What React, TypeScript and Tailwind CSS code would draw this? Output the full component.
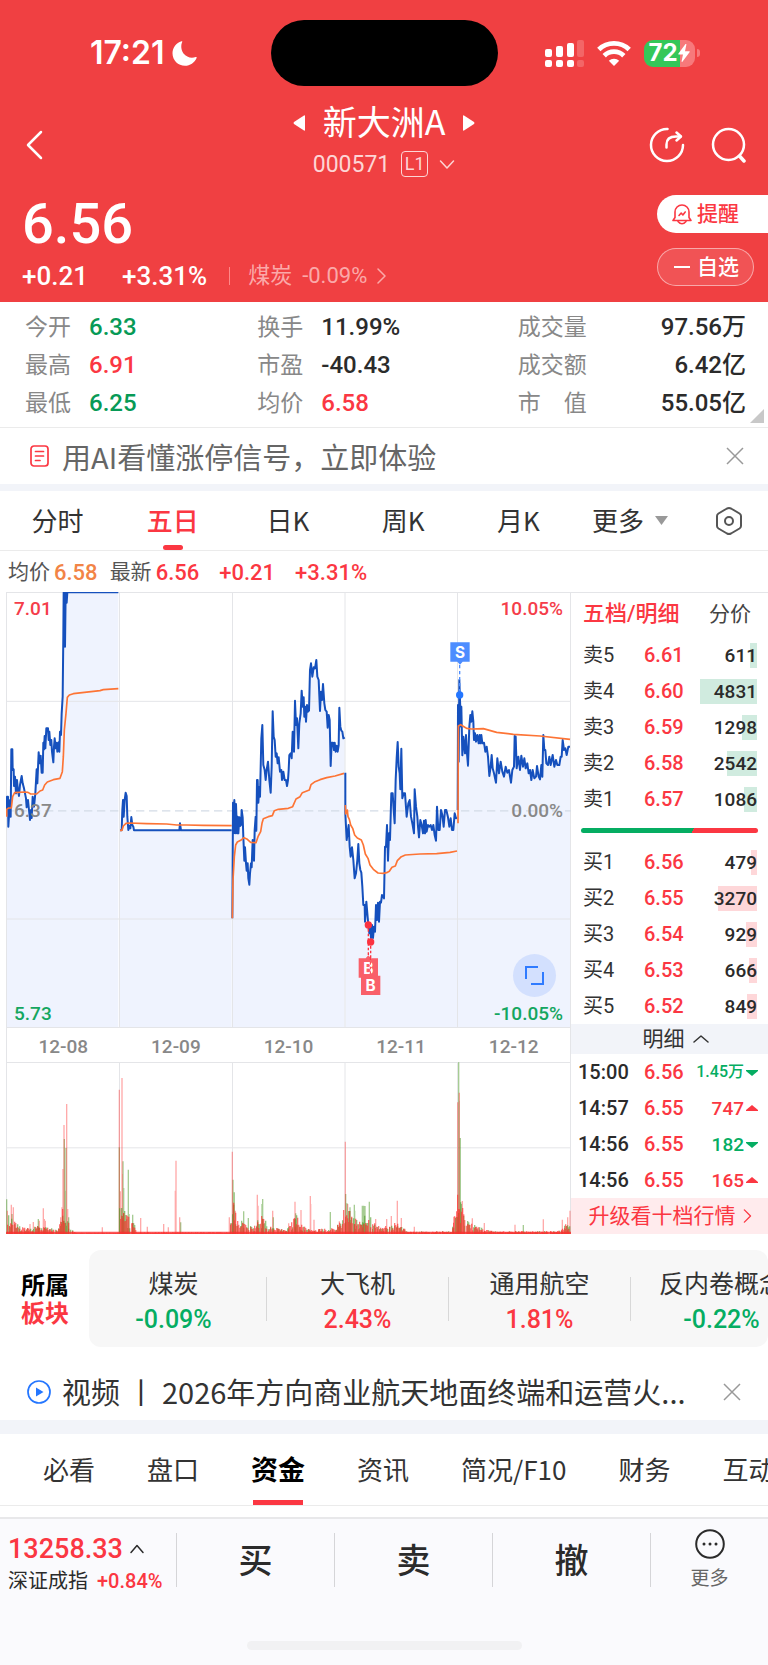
import React, { useState } from 'react';

type Tone = 'up' | 'down' | 'plain';
type Point = [number, number];

interface Stat {
  label: string;
  value: string;
  tone: Tone;
}

interface QuoteLevel {
  label: string;
  price: string;
  volume: string;
  bar: number;
}

interface Trade {
  time: string;
  price: string;
  volume: string;
  tone: Tone;
}

interface DaySeries {
  shift: number;
  price: string;
  average: string;
}

const toneClass: Record<Tone, string> = {
  up: 'text-[#fb3742]',
  down: 'text-[#079a56]',
  plain: 'text-[#2b2b2b]',
};

const statColumns: Stat[][] = [
  [
    { label: '今开', value: '6.33', tone: 'down' },
    { label: '最高', value: '6.91', tone: 'up' },
    { label: '最低', value: '6.25', tone: 'down' },
  ],
  [
    { label: '换手', value: '11.99%', tone: 'plain' },
    { label: '市盈', value: '-40.43', tone: 'plain' },
    { label: '均价', value: '6.58', tone: 'up' },
  ],
  [
    { label: '成交量', value: '97.56万', tone: 'plain' },
    { label: '成交额', value: '6.42亿', tone: 'plain' },
    { label: '市　值', value: '55.05亿', tone: 'plain' },
  ],
];

const periods = ['分时', '五日', '日K', '周K', '月K'];
const dates = ['12-08', '12-09', '12-10', '12-11', '12-12'];

const asks: QuoteLevel[] = [
  { label: '卖5', price: '6.61', volume: '611', bar: 7 },
  { label: '卖4', price: '6.60', volume: '4831', bar: 57 },
  { label: '卖3', price: '6.59', volume: '1298', bar: 15 },
  { label: '卖2', price: '6.58', volume: '2542', bar: 30 },
  { label: '卖1', price: '6.57', volume: '1086', bar: 13 },
];

const bids: QuoteLevel[] = [
  { label: '买1', price: '6.56', volume: '479', bar: 6 },
  { label: '买2', price: '6.55', volume: '3270', bar: 39 },
  { label: '买3', price: '6.54', volume: '929', bar: 11 },
  { label: '买4', price: '6.53', volume: '666', bar: 8 },
  { label: '买5', price: '6.52', volume: '849', bar: 10 },
];

const trades: Trade[] = [
  { time: '15:00', price: '6.56', volume: '1.45万', tone: 'down' },
  { time: '14:57', price: '6.55', volume: '747', tone: 'up' },
  { time: '14:56', price: '6.55', volume: '182', tone: 'down' },
  { time: '14:56', price: '6.55', volume: '165', tone: 'up' },
];

const sectors = [
  { name: '煤炭', change: '-0.09%', up: false },
  { name: '大飞机', change: '2.43%', up: true },
  { name: '通用航空', change: '1.81%', up: true },
  { name: '反内卷概念', change: '-0.22%', up: false },
];

const sections = ['必看', '盘口', '资金', '资讯', '简况/F10', '财务', '互动'];

const days: DaySeries[] = [
  {
    shift: 0,
    price:
      '20,690 21,650 24,650 25,740 28,690 30,660 32,710 34,508 37,508 38,570 41,568 42,618 45,590 48,640 51,600 54,632 57,648 60,615 65,588 68,610 72,625 75,640 78,655 80,682 84,660 87,690 90,720 93,690 95,714 98,650 102,680 106,640 110,568 112,610 116,517 119,550 122,527 125,578 128,578 130,488 132,508 134,468 136,505 139,445 144,445 146,480 148,455 151,495 154,480 156,515 160,547 162,500 164,475 167,505 170,488 172,515 176,487 178,515 180,455 183,465 185,400 188,350 190,165 191,37 195,200 197,37 200,68 202,37 355,37',
    average:
      '20,710 20,688 26,684 34,684 38,650 44,638 72,636 84,637 92,642 110,642 120,633 128,630 134,615 142,606 160,599 180,595 187,575 190,530 193,450 198,400 202,352 208,345 220,341 300,332 310,329 355,326',
  },
  {
    shift: 0,
    price:
      '360,751 365,751 367,690 369,660 371,710 374,660 377,638 380,648 382,710 385,750 388,738 391,745 394,711 397,735 400,740 402,751 538,751 540,730 543,751 695,751',
    average: '360,751 366,751 370,738 378,730 388,729 440,731 500,732 530,735 560,735 610,736 695,737',
  },
  {
    shift: 660,
    price:
      '37,1015 39,668 41,760 43,660 46,760 48,672 51,760 53,710 55,760 58,712 60,738 63,735 65,690 68,712 70,770 73,842 75,802 78,850 80,872 83,850 85,895 88,914 90,880 93,850 95,862 98,780 100,800 102,842 104,750 107,710 109,752 111,600 113,600 115,668 118,620 120,650 124,475 127,435 130,555 134,570 137,600 140,570 144,545 148,600 152,638 155,560 158,394 161,470 164,480 167,530 170,520 173,550 176,532 180,575 184,570 186,600 190,575 194,600 198,600 201,618 204,600 206,570 208,525 212,520 215,535 218,455 222,515 225,362 228,435 231,415 235,505 238,430 242,400 245,332 248,380 251,352 253,410 256,380 258,425 261,375 264,395 267,392 270,270 273,250 277,290 281,262 285,265 289,240 292,290 296,300 300,393 303,335 306,360 309,312 313,370 316,390 320,395 323,443 326,405 329,420 332,558 335,488 339,488 342,510 344,488 347,515 350,497 353,515 356,495 358,383 361,440 364,452 367,455 370,475 374,472',
    average:
      '37,1015 39,900 43,830 47,795 52,786 62,781 72,773 82,778 92,787 108,788 114,770 122,755 126,730 130,716 145,710 157,707 163,692 175,688 205,685 218,680 228,657 240,650 247,638 268,630 273,614 285,605 300,599 320,593 345,588 372,580',
  },
  {
    shift: 660,
    price:
      '376,578 376,700 380,780 386,735 389,800 392,830 396,802 400,840 404,895 408,880 412,840 415,792 418,850 421,870 424,878 427,920 430,975 434,975 435,1025 439,965 442,1000 445,1035 448,1060 450,1030 453,1074 456,1035 459,1074 462,1040 465,1055 468,975 471,1020 474,968 477,1025 480,965 483,968 486,945 492,955 495,800 498,800 501,735 504,842 507,760 510,780 514,640 518,640 521,690 524,730 527,600 530,535 533,486 536,560 539,580 541,628 544,506 547,655 551,640 555,640 560,710 565,670 569,660 573,710 578,735 582,760 584,628 588,680 592,710 594,740 597,772 601,720 605,735 609,760 612,722 615,760 617,720 620,755 624,735 628,740 632,735 636,750 640,735 644,765 648,782 651,680 655,750 659,750 663,690 667,705 671,740 675,690 679,690 684,712 688,740 692,715 696,750 700,750 704,700 708,715 711,712',
    average:
      '376,675 377,702 382,690 384,710 388,718 392,735 398,745 404,765 412,774 424,780 430,795 436,822 444,835 450,855 460,868 474,879 490,880 500,878 508,874 516,862 526,858 532,842 544,830 556,825 600,822 650,821 690,817 711,813',
  },
  {
    shift: 660,
    price:
      '713,690 714,375 716,545 718,300 720,360 723,440 724,380 727,526 730,470 733,500 735,520 738,465 741,520 744,557 748,440 751,405 754,425 757,394 760,425 762,480 765,460 768,485 772,465 776,490 779,465 781,490 784,465 787,490 792,488 796,515 800,500 804,530 808,588 812,560 815,525 818,565 822,580 828,608 832,535 837,580 842,545 847,575 852,590 857,560 862,578 867,570 870,590 873,608 877,570 882,560 884,468 887,470 890,565 895,530 900,570 904,527 909,560 913,535 917,565 922,550 926,580 930,570 934,600 938,570 943,595 948,590 951,558 956,590 960,598 964,555 967,590 970,465 973,510 976,510 979,550 984,555 988,530 992,555 998,525 1003,560 1008,540 1012,555 1018,555 1022,530 1025,530 1028,480 1032,510 1036,505 1040,525 1045,500 1050,500',
    average: '714,730 715,438 722,434 732,440 740,445 754,447 790,446 830,457 880,463 960,468 1050,478',
  },
];

// [x, height] of single tall bars
const redSpikes: Point[] = [
  [22, 70], [34, 88], [40, 80], [90, 30], [100, 36], [118, 40], [130, 77], [133, 45], [136, 40], [182, 50],
  [186, 80], [189, 195], [192, 327], [200, 390], [203, 75], [307, 20], [358, 433], [361, 128], [366, 468],
  [367, 180], [422, 48], [442, 22], [491, 30], [505, 20], [526, 130], [528, 220], [539, 50], [688, 50], [697, 247],
  [706, 70], [772, 118], [774, 85], [818, 70], [866, 32], [885, 97], [903, 72], [931, 114], [932, 90], [942, 43],
  [1018, 38], [1036, 277], [1043, 90], [1127, 45], [1160, 45], [1174, 54], [1192, 100], [1204, 48], [1243, 22],
  [1361, 52], [1367, 50], [1373, 395], [1378, 424], [1378, 190], [1387, 99], [1417, 47], [1453, 33], [1545, 28],
  [1630, 44], [1687, 43], [1703, 50], [1710, 70],
];

const greenSpikes: Point[] = [
  [20, 104], [36, 60], [115, 45], [193, 285], [195, 130], [198, 258], [206, 50], [358, 260], [369, 218], [371, 138],
  [385, 193], [387, 60], [398, 58], [542, 35], [699, 163], [703, 125], [731, 68], [745, 48], [786, 90], [788, 105],
  [820, 50], [887, 62], [991, 66], [1037, 120], [1041, 92], [1050, 80], [1063, 88], [1064, 70], [1087, 85],
  [1091, 85], [1095, 84], [1108, 97], [1376, 515], [1377, 400], [1381, 288], [1384, 90], [1570, 27],
];

const envelope: Point[] = [
  [18, 60], [40, 38], [60, 20], [90, 16], [115, 24], [150, 16], [175, 14], [190, 80], [205, 45], [220, 8], [230, 4],
  [357, 4], [358, 100], [372, 70], [400, 40], [410, 5], [690, 5], [697, 120], [710, 50], [735, 32], [760, 17],
  [775, 50], [795, 50], [805, 22], [850, 12], [870, 28], [890, 55], [905, 32], [920, 14], [985, 15], [1005, 17],
  [1025, 42], [1037, 90], [1060, 50], [1080, 34], [1095, 55], [1115, 45], [1140, 18], [1165, 28], [1185, 32],
  [1210, 20], [1225, 7], [1355, 8], [1372, 110], [1385, 85], [1400, 40], [1430, 22], [1460, 12], [1490, 7],
  [1680, 9], [1700, 32], [1712, 40],
];

const noise = (i: number) => {
  const n = Math.sin(i * 12.9898) * 43758.5453;
  return n - Math.floor(n);
};

const envelopeAt = (x: number) => {
  const i = envelope.findIndex(([px]) => px >= x);
  if (i <= 0) return envelope[0][1];
  const [x0, h0] = envelope[i - 1];
  const [x1, h1] = envelope[i];
  return h0 + ((h1 - h0) * (x - x0)) / (x1 - x0);
};

const barPath = (bars: Point[]) => bars.map(([x, h]) => `M${x} 536v-${Math.round(h)}`).join('');

const buildVolume = () => {
  const red: Point[] = [];
  const green: Point[] = [];
  for (let i = 0, x = 20; x < 1712; i++, x += 3) {
    const level = envelopeAt(x);
    const quiet = (x > 220 && x < 357) || (x > 405 && x < 690);
    if (quiet || noise(i) > 0.2) red.push([x, level * (0.35 + 0.75 * noise(i + 900))]);
    if (!quiet && noise(i + 300) > 0.35) green.push([x, level * (0.3 + 0.8 * noise(i + 1700))]);
  }
  return { red: barPath(red), green: barPath(green) };
};

const volume = buildVolume();

const areaOf = (points: string) => {
  const list = points.split(' ');
  const first = list[0].split(',')[0];
  const last = list[list.length - 1].split(',')[0];
  return `${first},1347 ${points} ${last},1347`;
};

const Chevron: React.FC<{ d: string; className: string }> = ({ d, className }) => (
  <svg viewBox="0 0 16 16" className={className} fill="none" stroke="currentColor" strokeWidth="1.5" strokeLinecap="round" strokeLinejoin="round">
    <path d={d} />
  </svg>
);

const CloseIcon = () => (
  <svg viewBox="0 0 18 18" className="size-[18px]" fill="none" stroke="#999" strokeWidth="1.5">
    <path d="M1 1l16 16M17 1L1 17" />
  </svg>
);

const StatusBar = () => (
  <div className="grid h-[104px] grid-cols-[1fr_227px_1fr] items-center pt-[2px]">
    <div className="flex items-center justify-end gap-[7px] pr-[74px]">
      <span className="font-[family-name:Inter,sans-serif] text-[32px] leading-none font-semibold">17:21</span>
      <svg viewBox="0 0 25 25" className="size-[25px]" fill="currentColor">
        <path d="M9.500.3C10.100.1 10.500.5 10.200 1.100C8.800 4.200 8.900 9 11.500 12.500C14.500 16.400 19.500 17.500 23.700 16C24.400 15.800 24.900 16.300 24.600 17C22.500 21.800 18 24.800 13 24.800C6 24.800.5 19.300.5 12.300C.5 6.800 4.200 2 9.500.3Z" />
      </svg>
    </div>
    <div className="h-[66px] rounded-full bg-black" />
    <div className="flex items-center gap-[13px] pl-[47px]">
      <svg viewBox="0 0 39 27" className="h-[27px] w-[39px]" fill="currentColor">
        <rect x="0" y="9" width="7" height="8" rx="2" />
        <rect x="11" y="6" width="7" height="11" rx="2" />
        <rect x="22" y="3" width="7" height="14" rx="2" />
        <rect x="32" y="0" width="7" height="17" rx="2" opacity=".2" />
        <rect x="0" y="20" width="7" height="7" rx="2" />
        <rect x="11" y="20" width="7" height="7" rx="2" />
        <rect x="22" y="20" width="7" height="7" rx="2" />
        <rect x="32" y="20" width="7" height="7" rx="2" opacity=".2" />
      </svg>
      <svg viewBox="0 0 34 25" className="h-[25px] w-[34px]" fill="none" stroke="currentColor" strokeWidth="4.800">
        <path d="M1.800 8.500A22 22 0 0 1 32.200 8.500" />
        <path d="M7.200 14.700A14 14 0 0 1 26.800 14.700" />
        <path d="M17 25L11.800 19.800A7.400 7.400 0 0 1 22.200 19.800Z" fill="currentColor" stroke="none" />
      </svg>
      <div className="flex items-center gap-[2px]">
        <div className="flex h-[27px] w-[51px] items-center rounded-[9px] bg-[linear-gradient(to_right,#34c759_36px,#f7797b_36px)] pl-[5px]">
          <span className="font-[family-name:Inter,sans-serif] text-[24px] leading-none font-bold">72</span>
          <svg viewBox="0 0 12 18" className="h-[18px] w-3" fill="currentColor">
            <path d="M7.500 0L.3 9.800c-.2.300 0 .7.400.7H5L3.600 17.300c-.1.500.5.8.8.400L11.700 8c.2-.3 0-.7-.4-.7H7L8.400.5C8.500 0 7.800-.3 7.500 0Z" />
          </svg>
        </div>
        <div className="h-2 w-[3px] rounded-r-full bg-[#f7797b]" />
      </div>
    </div>
  </div>
);

const Header = () => (
  <header className="bg-[#f04042] text-white">
    <StatusBar />
    <div className="grid h-20 grid-cols-[1fr_auto_1fr] items-center">
      <button aria-label="返回" className="ml-[26px] w-fit pt-[2px]">
        <svg viewBox="0 0 17 30" className="h-[30px] w-[17px]" fill="none" stroke="currentColor" strokeWidth="2.500" strokeLinecap="round" strokeLinejoin="round">
          <path d="M15 2L2 15l13 13" />
        </svg>
      </button>
      <div>
        <div className="flex h-[38px] items-center justify-center gap-[18px]">
          <button aria-label="上一只">
            <svg viewBox="0 0 12 16" className="h-4 w-3" fill="currentColor"><path d="M12 1v14q0 1-1 .5L1 9Q0 8 1 7L11 .5Q12 0 12 1Z" /></svg>
          </button>
          <h1 className="pb-1 text-[34px] leading-none">新大洲A</h1>
          <button aria-label="下一只">
            <svg viewBox="0 0 12 16" className="h-4 w-3" fill="currentColor"><path d="M0 1v14q0 1 1 .5L11 9Q12 8 11 7L1 .5Q0 0 0 1Z" /></svg>
          </button>
        </div>
        <div className="flex h-[42px] items-center justify-center gap-[11px] pt-[2px] text-[#fdd5d5]">
          <span className="font-[family-name:Roboto,sans-serif] text-[23px] leading-none">000571</span>
          <span className="flex h-[26px] w-[27px] items-center justify-center rounded border border-[#fdd5d5] font-[family-name:Roboto,sans-serif] text-[18px] leading-none">L1</span>
          <Chevron d="M1.500 5l6.500 7 6.500-7" className="size-4" />
        </div>
      </div>
      <div className="flex items-center justify-end gap-[26px] pt-[2px] pr-[22px]">
        <button aria-label="分享">
          <svg viewBox="0 0 36 36" className="size-9" fill="none" stroke="currentColor" strokeWidth="2.500" strokeLinecap="round" strokeLinejoin="round">
            <path d="M18.500 2A16 16 0 1 0 34 18" />
            <path d="M17.500 20.500v-3Q17.500 9.500 27 9.500h4.500" />
            <path d="M27.500 5.500l4.500 4-4.500 4" />
          </svg>
        </button>
        <button aria-label="搜索">
          <svg viewBox="0 0 35 36" className="h-9 w-[35px]" fill="none" stroke="currentColor" strokeWidth="2.500" strokeLinecap="round">
            <circle cx="17.500" cy="17.500" r="15.500" />
            <path d="M28.500 29l4.500 5" strokeWidth="3.500" />
          </svg>
        </button>
      </div>
    </div>
    <div className="flex h-[118px] justify-between">
      <div className="pl-[22px] font-[family-name:Roboto,'Noto_Sans_CJK_SC',sans-serif]">
        <div className="flex h-20 items-center text-[56px] leading-none font-medium">6.56</div>
        <div className="flex h-6 items-center text-[26px] leading-none font-medium">
          <span>+0.21</span>
          <span className="ml-[34px]">+3.31%</span>
          <a href="#sector" className="ml-[22px] flex items-center gap-[10px] text-[22px] font-normal text-[#fba9a9]">
            <span className="h-[18px] w-px bg-[#f88]" />
            <span className="ml-2">煤炭</span>
            <span>-0.09%</span>
            <Chevron d="M5 1l7 7-7 7" className="-ml-1 size-4" />
          </a>
        </div>
      </div>
      <div className="flex w-[111px] flex-col gap-[15px] pt-[11px] text-[21px] leading-none font-medium">
        <button className="flex h-[38px] items-center gap-[5px] rounded-l-full bg-white pl-[15px] text-[#fb3742]">
          <svg viewBox="0 0 20 21" className="h-[21px] w-5" fill="none" stroke="currentColor" strokeWidth="1.600" strokeLinecap="round" strokeLinejoin="round">
            <path d="M1 16.500h18l-2-3V8a7 7 0 0 0-14 0v5.500Z" />
            <path d="M6 17.500q4 4.500 8 0" />
            <path d="M7 11.500l2.200-2.500 1.700 2 2.300-3" />
          </svg>
          <span className="pb-[3px]">提醒</span>
        </button>
        <button className="mr-[14px] flex h-[38px] items-center gap-[7px] rounded-full border border-white/50 bg-white/10 pl-4">
          <span className="h-[2px] w-4 bg-white" />
          <span className="pb-[3px]">自选</span>
        </button>
      </div>
    </div>
  </header>
);

const Stats = () => (
  <div className="relative grid h-[126px] grid-cols-[232fr_260fr_228fr] border-b border-[#ebebeb] pt-[6px] pr-[22px] pl-[25px] text-[23px] leading-none">
    {statColumns.map((column, i) => (
      <dl key={i}>
        {column.map(stat => (
          <div key={stat.label} className={`flex h-[38px] items-center ${i === 2 ? 'justify-between' : 'gap-[18px]'}`}>
            <dt className="pb-[3px] text-[#888]">{stat.label}</dt>
            <dd className={`font-[family-name:Roboto,'Noto_Sans_CJK_SC',sans-serif] text-[24px] font-medium ${toneClass[stat.tone]}`}>{stat.value}</dd>
          </div>
        ))}
      </dl>
    ))}
    <svg viewBox="0 0 14 14" className="absolute right-1 bottom-1 size-[14px]" fill="#c8c8c8"><path d="M14 0v14H0Z" /></svg>
  </div>
);

const Notice = () => (
  <div className="flex h-14 items-center pr-6 pl-[30px]">
    <svg viewBox="0 0 19 22" className="h-[22px] w-[19px]" fill="none" stroke="#fb3742" strokeWidth="1.700" strokeLinecap="round">
      <rect x="1" y="1" width="17" height="20" rx="3" />
      <path d="M5.500 6.500h8M5.500 11h8M5.500 15.500h4.500" />
    </svg>
    <a href="#ai" className="ml-[13px] flex-1 text-[29px] leading-none text-[#666]">用AI看懂涨停信号，立即体验</a>
    <button aria-label="关闭"><CloseIcon /></button>
  </div>
);

const PeriodTabs: React.FC<{ active: string; onSelect: (period: string) => void }> = ({ active, onSelect }) => (
  <nav className="flex h-[60px] border-b border-[#ebebeb] text-[26px] leading-none text-[#333]">
    {periods.map(period => (
      <button key={period} onClick={() => onSelect(period)} className={`relative flex-1 pb-[2px] ${period === active ? 'font-medium text-[#fb3742]' : ''}`}>
        {period}
        {period === active && <span className="absolute bottom-0 left-1/2 h-[5px] w-5 -translate-x-1/2 rounded-full bg-[#fb3742]" />}
      </button>
    ))}
    <button className="ml-4 flex items-center gap-[11px] pb-[2px]">
      更多
      <svg viewBox="0 0 13 9" className="mt-[2px] h-[9px] w-[13px]" fill="#999"><path d="M0 0h13L6.500 9Z" /></svg>
    </button>
    <button aria-label="设置" className="mr-[25px] ml-[47px]">
      <svg viewBox="0 0 28 30" className="h-[30px] w-7" fill="none" stroke="#555" strokeWidth="2" strokeLinejoin="round">
        <path d="M14 2q1 0 2 .5l8.500 5q1.500 1 1.500 2.500v10q0 1.500-1.500 2.500L16 27.500q-2 1-4 0l-8.500-5Q2 21.500 2 20V10q0-1.500 1.500-2.500L12 2.500Q13 2 14 2Z" />
        <circle cx="14" cy="15" r="4" />
      </svg>
    </button>
  </nav>
);

const PriceChart = () => (
  <div className="relative font-[family-name:Roboto,sans-serif] text-[19px] leading-none font-medium">
    <svg viewBox="18 36 1695 1308" preserveAspectRatio="none" className="block h-[436px] w-full">
      {days.map((day, i) => (
        <polygon key={i} points={areaOf(day.price)} transform={`translate(${day.shift} 0)`} fill="#eff3fe" />
      ))}
      <g fill="none" stroke="#e4e5e8" strokeWidth="3">
        <path d="M18 37.500H1713M18 364H1713M18 1017H1713M18 1342.500H1713" />
        <path d="M19.500 36V1344M358.500 36V1344M697.500 36V1344M1035 36V1344M1372.500 36V1344M1711.500 36V1344" />
      </g>
      <path d="M18 692.500H1713" stroke="#d3dce6" strokeWidth="4" strokeDasharray="25 14" />
      {days.map((day, i) => (
        <g key={i} transform={`translate(${day.shift} 0)`} fill="none" strokeLinejoin="round">
          <polyline points={day.price} stroke="#1550bd" strokeWidth="6" />
          <polyline points={day.average} stroke="#fd7435" strokeWidth="5" />
        </g>
      ))}
      <g transform="translate(660 0)" fontFamily="Inter, sans-serif" fontWeight="700" fontSize="46" textAnchor="middle">
        <path d="M719 255v80" stroke="#4d8dff" strokeWidth="4" strokeDasharray="10 8" />
        <path d="M691 187h58v58h-21l-8 9-8-9h-21Z" fill="#4d8dff" />
        <text x="720" y="233" fill="#fff">S</text>
        <circle cx="719" cy="345" r="11" fill="#2476ff" />
        <circle cx="445" cy="1035" r="11" fill="#fb3340" />
        <path d="M445 1047v84M452 1098v84" stroke="#fb3340" strokeWidth="4" strokeDasharray="8 6" />
        <path d="M416 1135h21l8-9 8 9h21v58h-58Z" fill="#f95f69" />
        <text x="445" y="1181" fill="#fff">B</text>
        <path d="M451 1132v50" stroke="#fb3340" strokeWidth="3" strokeDasharray="8 6" />
        <circle cx="452" cy="1086" r="11" fill="#fb3340" />
        <path d="M423 1187h21l8-9 8 9h21v58h-58Z" fill="#f95f69" />
        <text x="452" y="1233" fill="#fff">B</text>
      </g>
    </svg>
    <span className="absolute top-[7px] left-2 text-[#f53d4a]">7.01</span>
    <span className="absolute top-[209px] left-2 text-[#888]">6.37</span>
    <span className="absolute bottom-[5px] left-2 text-[#14a660]">5.73</span>
    <span className="absolute top-[7px] right-2 text-[#f53d4a]">10.05%</span>
    <span className="absolute top-[209px] right-2 text-[#888]">0.00%</span>
    <span className="absolute right-2 bottom-[5px] text-[#14a660]">-10.05%</span>
    <button aria-label="全屏" className="absolute right-[15px] bottom-[31px] flex size-[43px] items-center justify-center rounded-full bg-[#d3e0fe]">
      <svg viewBox="0 0 19 19" className="size-[19px]" fill="none" stroke="#2f7bff" strokeWidth="2">
        <path d="M1 13V1h12M18 6v12H6" />
      </svg>
    </button>
  </div>
);

const VolumeChart = () => (
  <svg viewBox="18 20 1695 516" preserveAspectRatio="none" className="block h-[172px] w-full">
    <g fill="none" stroke="#e4e5e8" strokeWidth="3">
      <path d="M18 21.500H1713M18 277.500H1713" />
      <path d="M19.500 20V536M358.500 20V536M697.500 20V536M1035 20V536M1372.500 20V536M1711.500 20V536" />
    </g>
    <g fill="none" strokeWidth="4">
      <path d={barPath(greenSpikes)} stroke="#4e9a28" opacity=".5" />
      <path d={barPath(redSpikes)} stroke="#ff2a2a" opacity=".4" />
      <path d={volume.green} stroke="#4e9a28" opacity=".6" />
      <path d={volume.red} stroke="#ff2a2a" opacity=".65" />
    </g>
    <path d="M18 532.500H1713" stroke="#fb2f2f" strokeWidth="7" opacity=".8" />
  </svg>
);

const QuoteTable: React.FC<{ levels: QuoteLevel[]; side: 'ask' | 'bid' }> = ({ levels, side }) => (
  <table className="w-full">
    <tbody>
      {levels.map(level => (
        <tr key={level.label} className="h-9">
          <th scope="row" className="w-[61px] p-0 text-left font-normal text-[#333]">{level.label}</th>
          <td className="p-0 font-medium text-[#fb3742]">{level.price}</td>
          <td className="p-0">
            <div className="relative flex h-[25px] items-center justify-end">
              <span className={`absolute inset-y-0 right-0 ${side === 'ask' ? 'bg-[#d0ebdf]' : 'bg-[#fed7d9]'}`} style={{ width: level.bar }} />
              <span className="relative text-[19px] font-medium text-[#2b2b2b]">{level.volume}</span>
            </div>
          </td>
        </tr>
      ))}
    </tbody>
  </table>
);

const OrderBook = () => (
  <aside className="flex w-[197px] flex-col border-t border-[#e4e5e8] font-[family-name:Roboto,'Noto_Sans_CJK_SC',sans-serif] text-[20px] leading-none">
    <div className="flex h-11 items-center justify-between pr-[17px] pb-[2px] pl-3">
      <button className="text-[22px] font-medium text-[#fb3742]">五档/明细</button>
      <button className="text-[21px] text-[#444]">分价</button>
    </div>
    <div className="pr-[11px] pl-3">
      <QuoteTable levels={asks} side="ask" />
    </div>
    <div className="mx-[10px] my-[11px] h-[5px] rounded-full bg-[linear-gradient(115deg,#05ad62_63%,#fb3742_63%)]" />
    <div className="pr-[11px] pl-3">
      <QuoteTable levels={bids} side="bid" />
    </div>
    <button className="flex h-[30px] items-center justify-center gap-2 bg-[#f2f4f9] pl-3 text-[21px] text-[#333]">
      明细
      <Chevron d="M1 11l7-6 7 6" className="size-4" />
    </button>
    <table className="w-full">
      <tbody>
        {trades.map((trade, i) => (
          <tr key={i} className="h-9 font-medium">
            <td className="w-[73px] p-0 pl-[7px] text-[#2b2b2b]">{trade.time}</td>
            <td className="p-0 text-[#fb3742]">{trade.price}</td>
            <td className="p-0 pr-[10px]">
              <div className={`flex items-center justify-end gap-[2px] ${trade.tone === 'up' ? 'text-[#fb3742]' : 'text-[#05ad62]'}`}>
                <span className={trade.volume.length > 4 ? 'text-[16px]' : 'text-[19px]'}>{trade.volume}</span>
                <svg viewBox="0 0 12 7" className="h-[7px] w-3" fill="currentColor">
                  <path d={trade.tone === 'up' ? 'M6 0l6 5v1H0V5Z' : 'M6 7L0 2V1h12v1Z'} />
                </svg>
              </div>
            </td>
          </tr>
        ))}
      </tbody>
    </table>
    <a href="#level2" className="flex flex-1 items-center justify-center gap-1 bg-[#ffebed] pl-[3px] text-[21px] text-[#fb3742]">
      升级看十档行情
      <Chevron d="M5 1l7 7-7 7" className="size-[14px]" />
    </a>
  </aside>
);

const Sectors = () => (
  <section id="sector" className="mt-4 flex h-[97px] overflow-hidden">
    <h2 className="flex w-[89px] shrink-0 flex-col justify-center pb-[2px] pl-[21px] text-[24px] leading-7 font-bold text-black">
      <span>所属</span>
      <span className="text-[#fb3742]">板块</span>
    </h2>
    <ul className="flex min-w-0 flex-1 items-center overflow-hidden rounded-xl bg-[#f7f7f7]">
      {sectors.map((sector, i) => (
        <li key={sector.name} className={`flex h-11 w-[182px] shrink-0 flex-col items-center justify-center gap-3 pt-1 leading-none first:w-[177px] first:pr-2 ${i > 0 ? 'border-l border-[#d8d8d8]' : ''}`}>
          <span className="text-[25px] whitespace-nowrap text-[#333]">{sector.name}</span>
          <span className={`font-[family-name:Roboto,sans-serif] text-[25px] font-medium ${sector.up ? 'text-[#fb3742]' : 'text-[#05ad62]'}`}>{sector.change}</span>
        </li>
      ))}
    </ul>
  </section>
);

const VideoRow = () => (
  <div className="mt-4 flex h-[57px] items-center pr-[27px] pl-[27px]">
    <svg viewBox="0 0 24 24" className="size-6 shrink-0" fill="none" stroke="#2476ff" strokeWidth="1.700">
      <circle cx="12" cy="12" r="11" />
      <path d="M9 7.500v9l7.500-4.500Z" fill="#2476ff" stroke="none" />
    </svg>
    <a href="#video" className="ml-[11px] flex-1 text-[29px] leading-none whitespace-nowrap text-[#333]">视频 丨 2026年方向商业航天地面终端和运营火...</a>
    <button aria-label="关闭"><CloseIcon /></button>
  </div>
);

const SectionTabs: React.FC<{ active: string; onSelect: (section: string) => void }> = ({ active, onSelect }) => (
  <nav className="flex h-[72px] gap-[52px] overflow-hidden border-b border-[#ebebeb] pl-[43px] text-[26px] leading-none text-[#333]">
    {sections.map(section => (
      <button key={section} onClick={() => onSelect(section)} className={`relative shrink-0 pb-[2px] whitespace-nowrap ${section === active ? 'text-[27px] font-bold text-black' : ''}`}>
        {section}
        {section === active && <span className="absolute inset-x-[2px] bottom-0 h-[5px] bg-[#fb3742]" />}
      </button>
    ))}
  </nav>
);

const Footer = () => (
  <footer className="mt-[11px] h-[149px] border-t-2 border-[#e8e8ea] bg-[#fafafd] pt-[14px]">
    <div className="flex h-[54px] text-[#2b2b2b]">
      <button className="flex w-[176px] flex-col justify-center gap-2 pt-[6px] pl-2 font-[family-name:Roboto,'Noto_Sans_CJK_SC',sans-serif] text-[20px] leading-none">
        <span className="flex items-center gap-[6px]">
          <span className="text-[27px] font-medium text-[#fb3742]">13258.33</span>
          <Chevron d="M2 11.500l6-7 6 7" className="size-4" />
        </span>
        <span className="flex items-center gap-[9px] whitespace-nowrap">
          深证成指<span className="font-medium text-[#fb3742]">+0.84%</span>
        </span>
      </button>
      {['买', '卖', '撤'].map(action => (
        <button key={action} className="flex-1 border-l border-[#d5d5d8] pb-[3px] text-[34px] leading-none font-medium">{action}</button>
      ))}
      <button className="flex w-[118px] flex-col items-center justify-center gap-2 border-l border-[#d5d5d8] pb-[6px] text-[19px] leading-none text-[#666]">
        <svg viewBox="0 0 30 30" className="size-[30px] shrink-0" fill="none" stroke="#2b2b2b" strokeWidth="2">
          <circle cx="15" cy="15" r="13.800" />
          <path d="M9 15h.01M15 15h.01M21 15h.01" strokeWidth="3" strokeLinecap="round" />
        </svg>
        更多
      </button>
    </div>
    <div className="mx-auto mt-[54px] h-[9px] w-[275px] rounded-full bg-[#f1f1f3]" />
  </footer>
);

export default function App() {
  const [period, setPeriod] = useState('五日');
  const [section, setSection] = useState('资金');

  return (
    <div className="overflow-hidden bg-white font-[family-name:'Noto_Sans_CJK_SC',sans-serif]">
      <Header />
      <Stats />
      <Notice />
      <div className="h-[7px] bg-[#f2f4f9]" />
      <PeriodTabs active={period} onSelect={setPeriod} />
      <div className="flex h-[41px] items-center pt-[2px] pl-2 font-[family-name:Roboto,'Noto_Sans_CJK_SC',sans-serif] text-[22px] leading-none font-medium text-[#fb3742]">
        <span className="text-[21px] font-normal text-[#555]">均价</span>
        <span className="ml-1 text-[#f28446]">6.58</span>
        <span className="ml-3 text-[21px] font-normal text-[#555]">最新</span>
        <span className="ml-1">6.56</span>
        <span className="ml-5">+0.21</span>
        <span className="ml-5">+3.31%</span>
      </div>
      <div className="flex">
        <div className="ml-[6px] min-w-0 flex-1">
          <PriceChart />
          <div className="grid h-[34px] grid-cols-5 items-center border-x border-[#e4e5e8] pt-[2px] text-center font-[family-name:Roboto,sans-serif] text-[19px] leading-none font-medium text-[#888]">
            {dates.map(date => <span key={date}>{date}</span>)}
          </div>
          <VolumeChart />
        </div>
        <OrderBook />
      </div>
      <Sectors />
      <VideoRow />
      <div className="h-[14px] bg-[#f2f4f9]" />
      <SectionTabs active={section} onSelect={setSection} />
      <Footer />
    </div>
  );
}
